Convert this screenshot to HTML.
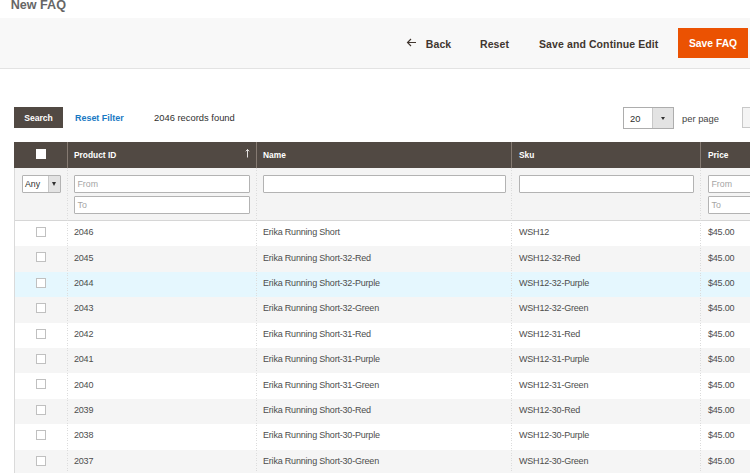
<!DOCTYPE html>
<html><head><meta charset="utf-8">
<style>
*{box-sizing:border-box;margin:0;padding:0}
html,body{width:750px;height:473px;overflow:hidden;background:#fff}
body{position:relative;font-family:"Liberation Sans",sans-serif;color:#303030}
.a{position:absolute;white-space:nowrap}
.t{line-height:1}
#title{left:10.7px;top:-1px;font-size:12.6px;font-weight:bold;color:#666}
#bar{left:0;top:18px;width:750px;height:51px;background:#f8f8f8;border-bottom:1px solid #e3e3e3}
.btn{font-size:10.5px;font-weight:bold;color:#41362f;top:38.5px;letter-spacing:0.1px}
#save{left:678px;top:28px;width:70px;height:30px;background:#eb5202;color:#fff;font-size:10.3px;font-weight:bold;padding-left:11px;padding-top:1px;line-height:30px}
#search{left:14px;top:107px;width:49px;height:21px;background:#514943;color:#fff;font-size:8.6px;font-weight:bold;line-height:21px;padding-top:1px;text-align:center}
#rf{left:75px;top:113.5px;font-size:8.95px;font-weight:bold;color:#1979c3}
#rec{left:154px;top:113px;font-size:9.4px;color:#303030}
#pp{left:623px;top:107px;width:51px;height:22px;border:1px solid #adadad;background:#fff}
#pp .dd{position:absolute;left:28px;top:0;width:21px;height:20px;background:#e3e3e3;border-left:1px solid #c8c8c8}
#pp .tri{position:absolute;left:7.5px;top:8.5px;width:0;height:0;border-left:2.5px solid transparent;border-right:2.5px solid transparent;border-top:3px solid #303030}
#pp .v{position:absolute;left:6px;top:5.7px;font-size:9.4px;color:#303030}
#ppl{left:682px;top:114px;font-size:9.4px;color:#454545}
#nx{left:742px;top:107px;width:20px;height:21px;border:1px solid #c8c8c8;background:#f4f4f4}
#thead{left:14px;top:142px;width:740px;height:26px;background:#514943}
.hd{position:absolute;top:142px;height:26px;width:1px;background:#857a72}
.ht{top:151px;font-size:8.4px;font-weight:bold;color:#fff}
#hcb{left:36px;top:149px;width:10px;height:10px;background:#fff}
#frow{left:14px;top:168px;width:740px;height:53px;background:#f4f4f4;border-bottom:1px solid #d6d6d6}
.lb{position:absolute;left:14px;top:168px;width:1px;height:305px;background:#dadada}
.inp{position:absolute;height:18px;background:#fff;border:1px solid #b3b3b3;border-radius:1px;font-size:8.8px;color:#a5a5a5;padding-left:2.5px;line-height:16px}
.vd{position:absolute;top:168px;height:305px;width:1px;background:repeating-linear-gradient(to bottom,#dcdcdc 0,#dcdcdc 1px,transparent 1px,transparent 2.5px)}
.row{position:absolute;left:15px;width:740px;height:25.4px}
.cb{position:absolute;left:36px;width:10px;height:10px;border:1px solid #c0c0c0;background:#fff}
.c{position:absolute;font-size:9px;letter-spacing:-0.2px;color:#4d4d4d}
</style></head><body>
<div id="title" class="a t">New FAQ</div>
<div id="bar" class="a"></div>
<svg class="a" style="left:406px;top:38px" width="11" height="9" viewBox="0 0 11 9"><path d="M10 4.5H2M5 1L1.5 4.5L5 8" fill="none" stroke="#41362f" stroke-width="1.15"/></svg>
<div class="a t btn" style="left:425.8px">Back</div>
<div class="a t btn" style="left:480px">Reset</div>
<div class="a t btn" style="left:539px">Save and Continue Edit</div>
<div id="save" class="a">Save FAQ</div>

<div id="search" class="a">Search</div>
<div id="rf" class="a t">Reset Filter</div>
<div id="rec" class="a t">2046 records found</div>
<div id="pp" class="a"><div class="v t">20</div><div class="dd"><div class="tri"></div></div></div>
<div id="ppl" class="a t">per page</div>
<div id="nx" class="a"></div>

<div id="thead" class="a"></div>
<div class="hd" style="left:67px"></div>
<div class="hd" style="left:256px"></div>
<div class="hd" style="left:511px"></div>
<div class="hd" style="left:700px"></div>
<div id="hcb" class="a"></div>
<div class="a t ht" style="left:74px">Product ID</div>
<svg class="a" style="left:245px;top:148px" width="6" height="10" viewBox="0 0 6 10"><path d="M2.5 1.5V9.5M0.8 3.3L2.5 1.5L4.2 3.3" fill="none" stroke="#f4f2f0" stroke-width="0.9"/></svg>
<div class="a t ht" style="left:263px">Name</div>
<div class="a t ht" style="left:519px">Sku</div>
<div class="a t ht" style="left:708px">Price</div>

<div id="frow" class="a"></div>
<div class="row" style="top:221.0px;background:#fff"></div>
<div class="cb" style="top:227.0px"></div>
<div class="a t c" style="left:74px;top:228.2px">2046</div>
<div class="a t c" style="left:263px;top:228.2px">Erika Running Short</div>
<div class="a t c" style="left:519px;top:228.2px">WSH12</div>
<div class="a t c" style="left:708px;top:228.2px">$45.00</div>
<div class="row" style="top:246.4px;background:#f5f5f5"></div>
<div class="cb" style="top:252.4px"></div>
<div class="a t c" style="left:74px;top:253.6px">2045</div>
<div class="a t c" style="left:263px;top:253.6px">Erika Running Short-32-Red</div>
<div class="a t c" style="left:519px;top:253.6px">WSH12-32-Red</div>
<div class="a t c" style="left:708px;top:253.6px">$45.00</div>
<div class="row" style="top:271.8px;background:#e5f7fe"></div>
<div class="cb" style="top:277.8px"></div>
<div class="a t c" style="left:74px;top:279.0px">2044</div>
<div class="a t c" style="left:263px;top:279.0px">Erika Running Short-32-Purple</div>
<div class="a t c" style="left:519px;top:279.0px">WSH12-32-Purple</div>
<div class="a t c" style="left:708px;top:279.0px">$45.00</div>
<div class="row" style="top:297.2px;background:#f5f5f5"></div>
<div class="cb" style="top:303.2px"></div>
<div class="a t c" style="left:74px;top:304.4px">2043</div>
<div class="a t c" style="left:263px;top:304.4px">Erika Running Short-32-Green</div>
<div class="a t c" style="left:519px;top:304.4px">WSH12-32-Green</div>
<div class="a t c" style="left:708px;top:304.4px">$45.00</div>
<div class="row" style="top:322.6px;background:#fff"></div>
<div class="cb" style="top:328.6px"></div>
<div class="a t c" style="left:74px;top:329.8px">2042</div>
<div class="a t c" style="left:263px;top:329.8px">Erika Running Short-31-Red</div>
<div class="a t c" style="left:519px;top:329.8px">WSH12-31-Red</div>
<div class="a t c" style="left:708px;top:329.8px">$45.00</div>
<div class="row" style="top:348.0px;background:#f5f5f5"></div>
<div class="cb" style="top:354.0px"></div>
<div class="a t c" style="left:74px;top:355.2px">2041</div>
<div class="a t c" style="left:263px;top:355.2px">Erika Running Short-31-Purple</div>
<div class="a t c" style="left:519px;top:355.2px">WSH12-31-Purple</div>
<div class="a t c" style="left:708px;top:355.2px">$45.00</div>
<div class="row" style="top:373.4px;background:#fff"></div>
<div class="cb" style="top:379.4px"></div>
<div class="a t c" style="left:74px;top:380.6px">2040</div>
<div class="a t c" style="left:263px;top:380.6px">Erika Running Short-31-Green</div>
<div class="a t c" style="left:519px;top:380.6px">WSH12-31-Green</div>
<div class="a t c" style="left:708px;top:380.6px">$45.00</div>
<div class="row" style="top:398.8px;background:#f5f5f5"></div>
<div class="cb" style="top:404.8px"></div>
<div class="a t c" style="left:74px;top:406.0px">2039</div>
<div class="a t c" style="left:263px;top:406.0px">Erika Running Short-30-Red</div>
<div class="a t c" style="left:519px;top:406.0px">WSH12-30-Red</div>
<div class="a t c" style="left:708px;top:406.0px">$45.00</div>
<div class="row" style="top:424.2px;background:#fff"></div>
<div class="cb" style="top:430.2px"></div>
<div class="a t c" style="left:74px;top:431.4px">2038</div>
<div class="a t c" style="left:263px;top:431.4px">Erika Running Short-30-Purple</div>
<div class="a t c" style="left:519px;top:431.4px">WSH12-30-Purple</div>
<div class="a t c" style="left:708px;top:431.4px">$45.00</div>
<div class="row" style="top:449.6px;background:#f5f5f5"></div>
<div class="cb" style="top:455.6px"></div>
<div class="a t c" style="left:74px;top:456.8px">2037</div>
<div class="a t c" style="left:263px;top:456.8px">Erika Running Short-30-Green</div>
<div class="a t c" style="left:519px;top:456.8px">WSH12-30-Green</div>
<div class="a t c" style="left:708px;top:456.8px">$45.00</div>
<div class="lb"></div>
<div class="vd" style="left:67px"></div>
<div class="vd" style="left:256px"></div>
<div class="vd" style="left:511px"></div>
<div class="vd" style="left:700px"></div>

<div class="inp" style="left:22px;top:175px;width:39px;color:#303030;padding-left:2px">Any<div style="position:absolute;left:25px;top:0;width:12px;height:16px;background:#e3e3e3;border-left:1px solid #c8c8c8"><div style="position:absolute;left:3px;top:6px;border-left:2.5px solid transparent;border-right:2.5px solid transparent;border-top:4px solid #303030"></div></div></div>
<div class="inp" style="left:74px;top:175px;width:176px">From</div>
<div class="inp" style="left:74px;top:196px;width:176px">To</div>
<div class="inp" style="left:263px;top:175px;width:243px"></div>
<div class="inp" style="left:519px;top:175px;width:175px"></div>
<div class="inp" style="left:708px;top:175px;width:60px">From</div>
<div class="inp" style="left:708px;top:196px;width:60px">To</div>
</body></html>
